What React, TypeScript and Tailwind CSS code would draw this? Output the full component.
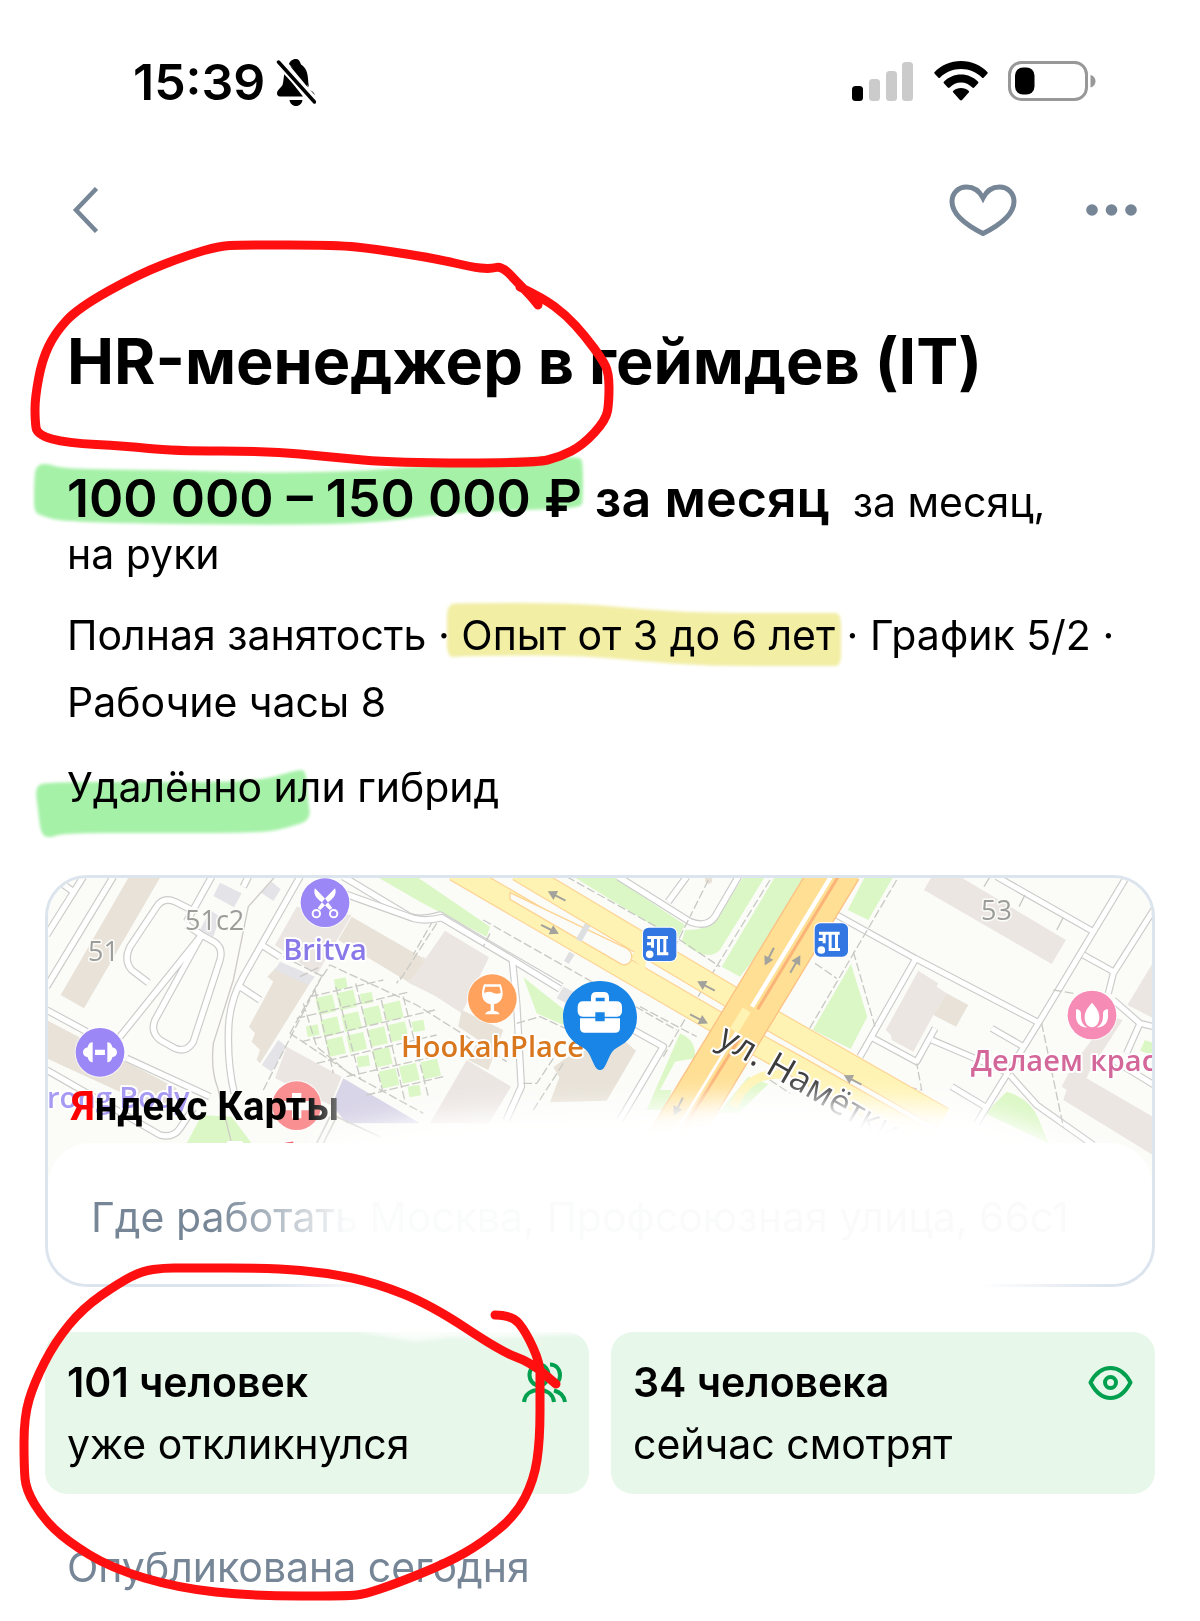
import { ReactNode } from "react";

type Point = [number, number];

// Rounds a hand-drawn point list with midpoint quadratics
function smooth(points: Point[], closed = false) {
  const mid = (a: Point, b: Point): Point => [(a[0] + b[0]) / 2, (a[1] + b[1]) / 2];
  if (closed) {
    const start = mid(points[points.length - 1], points[0]);
    const body = points.map((p, i) => {
      const m = mid(p, points[(i + 1) % points.length]);
      return `Q${p[0]} ${p[1]} ${m[0]} ${m[1]}`;
    });
    return `M${start[0]} ${start[1]} ${body.join(" ")} Z`;
  }
  const body = points.slice(1, -1).map((p, i) => {
    const m = mid(p, points[i + 2]);
    return `Q${p[0]} ${p[1]} ${m[0]} ${m[1]}`;
  });
  const last = points[points.length - 1];
  return `M${points[0][0]} ${points[0][1]} ${body.join(" ")} L${last[0]} ${last[1]}`;
}

const titleStroke: Point[] = [
  [520, 287], [543, 298], [566, 315], [585, 336], [602, 359], [609, 373], [609, 402], [606, 420], [583, 445], [560, 457],
  [535, 463], [396, 463], [330, 457], [269, 451], [173, 451], [125, 446], [67, 443], [37, 435], [35, 420], [35, 398],
  [42, 360], [55, 333], [78, 308], [139, 274], [188, 255], [220, 246], [240, 245], [337, 245], [375, 249], [438, 259],
  [471, 267], [490, 269], [502, 266], [520, 285], [530, 295], [538, 305],
];

const statStroke: Point[] = [
  [495, 1315], [512, 1315], [526, 1332], [540, 1363], [540, 1383], [540, 1440], [534, 1480], [516, 1515], [482, 1543],
  [447, 1563], [395, 1584], [365, 1594], [348, 1596], [253, 1596], [178, 1588], [111, 1568], [67, 1541], [43, 1518],
  [26, 1490], [24, 1467], [24, 1417], [34, 1383], [55, 1342], [83, 1308], [119, 1283], [142, 1271], [164, 1268],
  [184, 1268], [273, 1268], [328, 1273], [376, 1283], [431, 1305], [502, 1352], [530, 1362], [556, 1384],
];

const salaryMark: Point[] = [
  [35, 466], [46, 463], [63, 469], [168, 470], [269, 473], [370, 471], [450, 463], [535, 457], [579, 457], [583, 461],
  [583, 500], [581, 508], [526, 510], [446, 513], [370, 524], [227, 525], [63, 522], [42, 516], [34, 512], [34, 490],
];

const experienceMark: Point[] = [
  [447, 604], [462, 603], [574, 603], [640, 609], [703, 613], [830, 613], [841, 613], [841, 640], [841, 666], [830, 666],
  [703, 666], [640, 661], [574, 655], [462, 656], [447, 658], [447, 630],
];

const remoteMark: Point[] = [
  [35, 786], [48, 782], [150, 782], [256, 782], [297, 770], [306, 770], [308, 800], [311, 820], [290, 827], [264, 833],
  [150, 833], [63, 833], [50, 838], [41, 835], [38, 810],
];

function MarkerHighlights() {
  return (
    <svg className="pointer-events-none absolute top-0 left-0 h-[1621px] w-[1200px] mix-blend-multiply" viewBox="0 0 1200 1621" aria-hidden="true">
      <defs>
        <filter id="marker" x="-5%" y="-20%" width="110%" height="140%">
          <feGaussianBlur stdDeviation="1.5" />
        </filter>
      </defs>
      <g filter="url(#marker)">
        <path d={smooth(salaryMark, true)} fill="#a6f1a8" />
        <path d={smooth(experienceMark, true)} fill="#f2eea4" />
        <path d={smooth(remoteMark, true)} fill="#a6f1a8" />
      </g>
    </svg>
  );
}

function PenStrokes() {
  return (
    <svg className="pointer-events-none absolute top-0 left-0 h-[1621px] w-[1200px]" viewBox="0 0 1200 1621" aria-hidden="true">
      <defs>
        <linearGradient id="eraser">
          <stop offset="0" stopColor="#fff" stopOpacity="0" />
          <stop offset=".15" stopColor="#fff" />
          <stop offset=".85" stopColor="#fff" />
          <stop offset="1" stopColor="#fff" stopOpacity="0" />
        </linearGradient>
        <filter id="soft" x="-10%" y="-80%" width="120%" height="260%">
          <feGaussianBlur stdDeviation="2" />
        </filter>
      </defs>
      <rect x="260" y="1282" width="850" height="9" fill="url(#eraser)" />
      <path d="M355 1330 390 1337 415 1341 450 1337 500 1338 545 1335 585 1334V1328H355Z" fill="#fff" opacity=".8" filter="url(#soft)" />
      <g fill="none" stroke="#ff0f0f" strokeWidth="9" strokeLinecap="round" strokeLinejoin="round">
        <path d={smooth(titleStroke)} />
        <path d={smooth(statStroke)} />
      </g>
    </svg>
  );
}

function BellOffIcon() {
  return (
    <svg className="h-[48px] w-[40px]" viewBox="0 0 40 48" aria-hidden="true">
      <path d="M20 1c-4 0-6 2.400-7 5l20 23c-1-4-.5-12-3-17-1.400-3-3.600-4.600-5-5.500C24 3 22.500 1 20 1ZM8.500 15c-1 4-1 9-2 12-1.500 3-5.500 5-5.500 8.500C1 37 2 38.500 4 38.500h23Z" />
      <path d="M30 20c1 6 1 9 3.500 11.500C36 33.500 39 35 38.500 37.500L14 8Z" />
      <path d="M13.500 42h13c-.5 3.500-3 6-6.500 6s-6-2.500-6.500-6Z" />
      <path d="m3 5 37 39" stroke="#fff" strokeWidth="8" />
      <path d="m2.500 4 36 40" stroke="#000" strokeWidth="3.500" strokeLinecap="round" />
    </svg>
  );
}

function WifiIcon() {
  return (
    <svg className="h-[40px] w-[54px]" viewBox="0 0 54 40" aria-hidden="true">
      <path d="M27 0C16.500 0 7 4.300.7 11c-.7.700-.6 1.200 0 1.800l3.500 3.700c.7.700 1.200.700 1.900 0C11.500 11.200 18.800 8 27 8s15.500 3.200 20.900 8.500c.7.700 1.200.700 1.900 0l3.500-3.700c.6-.6.7-1.100 0-1.800C47 4.300 37.500 0 27 0Z" />
      <path d="M27 13.500c-6.700 0-12.500 2.700-16.900 7-.7.700-.7 1.200 0 1.900l3.700 4c.6.700 1.200.600 1.900 0C18.700 23.500 22.700 21.500 27 21.500s8.300 2 11.300 4.900c.7.600 1.300.700 1.900 0l3.700-4c.7-.7.7-1.200 0-1.900-4.400-4.300-10.200-7-16.900-7Z" />
      <path d="M27 27c-3 0-5.500 1-7.600 2.800-.7.600-.7 1.100-.1 1.800l6.400 7.100c.9 1 1.700 1 2.600 0l6.400-7.100c.6-.7.600-1.200-.1-1.800C32.500 28 30 27 27 27Z" />
    </svg>
  );
}

function StatusBar() {
  return (
    <div className="flex h-[160px] items-center justify-between pt-[2px] pr-[104px] pl-[133px]">
      <div className="flex items-center gap-[11px] pt-[2px]">
        <span className="text-[50px] leading-[60px] font-semibold">15:39</span>
        <BellOffIcon />
      </div>
      <div className="flex items-center gap-[20px]">
        <svg className="h-[40px] w-[62px]" viewBox="0 0 62 40" aria-hidden="true">
          <rect x="0" y="25" width="11" height="15" rx="3.500" />
          <g fill="#cbcbcb">
            <rect x="17" y="18" width="11" height="22" rx="3.500" />
            <rect x="34" y="10" width="11" height="30" rx="3.500" />
            <rect x="50" y="1" width="11" height="39" rx="3.500" />
          </g>
        </svg>
        <WifiIcon />
        <svg className="h-[40px] w-[88px]" viewBox="0 0 88 40" aria-hidden="true">
          <rect x="1.500" y="1.500" width="77" height="37" rx="12" fill="none" stroke="#989898" strokeWidth="3" />
          <rect x="7" y="6.500" width="19.500" height="27" rx="8" />
          <path d="M82.500 14c3 .800 5 3 5 6.300s-2 5.500-5 6.300Z" fill="#989898" />
        </svg>
      </div>
    </div>
  );
}

function NavBar() {
  return (
    <nav className="flex h-[100px] items-center justify-between pr-[60px] pl-[70px] text-[#768696]">
      <button type="button" aria-label="Назад">
        <svg className="h-[46px] w-[30px]" viewBox="0 0 30 46" fill="none" stroke="currentColor" strokeWidth="4.500" aria-hidden="true">
          <path d="M26.500 1.500 6 23l20.500 21.500" />
        </svg>
      </button>
      <div className="flex items-center gap-[67px]">
        <button type="button" aria-label="В избранное">
          <svg className="h-[52px] w-[68px]" viewBox="0 0 68 52" fill="none" stroke="currentColor" strokeWidth="5" aria-hidden="true">
            <path d="M34 14C30.500 7 25 3 17.500 3 9 3 3 9.500 3 17.500 3 31 17 41 34 49.500 51 41 65 31 65 17.500 65 9.500 59 3 50.500 3 43 3 37.500 7 34 14Z" />
          </svg>
        </button>
        <button type="button" aria-label="Ещё">
          <svg className="h-[52px] w-[56px]" viewBox="0 0 56 52" fill="currentColor" aria-hidden="true">
            <circle cx="8" cy="26" r="5.800" />
            <circle cx="27.500" cy="26" r="5.800" />
            <circle cx="47" cy="26" r="5.800" />
          </svg>
        </button>
      </div>
    </nav>
  );
}

// Every street is drawn twice: grey casing first, white fill on top
function Streets({ d, width = 16 }: { d: string; width?: number }) {
  return (
    <g fill="none" strokeLinejoin="round">
      <path d={d} stroke="#cccccb" strokeWidth={width + 7} />
      <path d={d} stroke="#ffffff" strokeWidth={width} />
    </g>
  );
}

function RoadArrow({ x, y, angle }: { x: number; y: number; angle: number }) {
  return (
    <g transform={`translate(${x} ${y}) rotate(${angle})`} fill="#a3a29c">
      <rect x="-30" y="-3" width="36" height="6" />
      <path d="M3-15 30 0 3 15Z" />
    </g>
  );
}

function PoiPin({ x, y, color, children }: { x: number; y: number; color: string; children: ReactNode }) {
  return (
    <g transform={`translate(${x} ${y})`}>
      <circle r="76" fill="#fff" opacity=".7" />
      <circle r="73" fill={color} />
      {children}
    </g>
  );
}

function BusStop({ x, y }: { x: number; y: number }) {
  return (
    <g transform={`translate(${x} ${y})`}>
      <rect x="-3" y="-3" width="106" height="106" rx="20" fill="#fff" />
      <rect width="100" height="100" rx="17" fill="#3377e2" />
      <path d="M13 25h62v9h-5v40h6v9H42V34H33v26h-9v-7H12v-9h12V34H13ZM51 34v40h10V34Z" fill="#fff" fillRule="evenodd" />
      <circle cx="20" cy="80" r="14" fill="#fff" stroke="#3377e2" strokeWidth="5" />
    </g>
  );
}

const lawns: Point[] = [
  [887, 434], [950, 420], [1027, 467], [1090, 453], [902, 500], [965, 485], [917, 560], [980, 547], [1043, 530],
  [1105, 515], [1057, 592], [1077, 655], [1138, 640], [1202, 627],
];
const smallLawns: Point[] = [[932, 370], [1010, 414], [848, 511], [1165, 497], [1000, 603], [1153, 692]];

function CityMap() {
  return (
    <svg
      className="absolute inset-x-0 top-0 h-[310px] w-full"
      viewBox="48 878 1104 310"
      preserveAspectRatio="xMidYMin slice"
      fontFamily="'Open Sans', 'Noto Sans', sans-serif"
      role="img"
      aria-label="Карта"
    >
      <defs>
        <filter id="haze" x="-20%" y="-40%" width="140%" height="180%">
          <feGaussianBlur stdDeviation="13" />
        </filter>
      </defs>
      <rect x="48" y="878" width="1104" height="310" fill="#fbfcf8" />

      {/* West blocks */}
      <g transform="translate(30 860) scale(.33333)">
        <g fill="#e8e2d8">
          <path d="M297 50h95L162 445l-70-40ZM50 480l390 205-40 70L50 595ZM750 310l90 60-150 240-10-10 10-30-25-25 10-25-18-20 73-135-18-15ZM965 170l225 130-40 75-225-135Z" />
        </g>
        <g fill="#ece6e3">
          <path d="m800 140 165 25-105 180-125-90ZM770 560l165 90-35 85-165-80ZM1180 290l60 40v90l-110-55Z" />
        </g>
        <g fill="#e4e3e7">
          <path d="m570 68 65 32-23 42-62-34ZM725 65l27 23-22 35-37-25ZM750 305l105 45-20 25-100-45ZM745 540l25 20-45 75-30-20ZM540 150l30 20-20 60-40-20Z" />
        </g>
        <path d="m940 655 230 135H950l-45-55Z" fill="#d9d5e8" />
        <g fill="#dcf7c6">
          <path d="M1040 50h120l220 150-10 30-200-105ZM515 765l90 5 60 80H470Z" />
          {lawns.map(([x, y]) => (
            <rect key={`${x}-${y}`} x={x - 26} y={y - 26} width="52" height="52" transform={`rotate(-13 ${x} ${y})`} />
          ))}
          {smallLawns.map(([x, y]) => (
            <rect key={`${x}-${y}`} x={x - 18} y={y - 15} width="36" height="32" transform={`rotate(-10 ${x} ${y})`} />
          ))}
        </g>
        <Streets d="M250 50 50 380M160 50 50 225M95 70l35 25M50 450l120 65M290 595l250 115M50 630l340 195q40 10 60-20l40-60M655 50l-15 30" />
        <Streets d="M545 50 470 185M485 150l-50-25q-35-15-55 15l-80 120q-20 40 5 70l50 38M470 195l45 30M515 225 270 530M515 225l40 22q25 18 15 53l-80 245q-20 35-55 20l-45-25q-30-25-15-60Z" />
        <Streets d="M810 50 640 350q-40 70-44 150-5 110 17 200M695 255l55 35M630 380l60 40M940 50l200 120q30 12 90-5l210 125 155 90" />
        <path d="m735 50-80 90-45 220-60 190q-8 80 12 130l43 170" fill="none" stroke="#cfcbc6" strokeWidth="4" />
        <g fill="none" stroke="#c9c9c4" strokeWidth="4" strokeDasharray="26 9">
          <path d="m700 690 170-330 30-45 260 120 270 170M810 350l60-30M760 290l120 60M780 520l100-180M780 520l180 120 220 120M820 430l40 130 110 90M855 390l55 250M917 380l75 280M977 370l80 320M1054 420l70 300M1120 410l75 300" />
          <path d="m840 410 220-50M800 475l340-80M815 545l400-95M860 610l360-85M950 650l270-62M1010 705l230-55M1210 180l-110 190" />
        </g>
        <path d="m900 770-40 80M920 770l-40 80M920 770l130 60" fill="none" stroke="#d5d5d2" strokeWidth="5" />
      </g>

      {/* Centre blocks */}
      <g transform="translate(400 860) scale(.33333)">
        <g fill="#dcf7c6">
          <path d="M520 50h120l215 145-25 45ZM855 210q70 0 95-30l80-130h65L960 270q-40 40-115-25ZM1125 50h130L1020 350l-55-30ZM370 352l120 95v48l-80-35ZM840 520q50 20 45 75l-60 10-45 85h35l-15 60h-60ZM1045 650l60 22-90 88h-60Z" />
        </g>
        <g fill="#ece6e3">
          <path d="m135 212 132 80-82 168L32 360ZM200 600l133 80-65 110H90Z" />
        </g>
        <g fill="#e8e2d8">
          <path d="m0 258 75 47-45 55-30-10ZM185 450l125 60-45 120-60-30 30-60-60-40ZM660 530l48 42-88 150-170 5 28-75-18-30 40-30 80-30Z" />
          <circle cx="926" cy="60" r="11" />
        </g>
        <path d="m600 140 55 30-15 20-50-25ZM490 380l40 20-20 35-40-20Z" fill="#e3e3e6" />
        <Streets d="M-170 100 40 175q40 10 85-2l205 122 150 92M337 300l13 130 14 250-45 100M700 510l90 50-130 220M655 50l215 135q50 20 75-15l70-120M860 50l-55 75" />
        <g fill="none" stroke="#c9c9c4" strokeWidth="4" strokeDasharray="26 9">
          <path d="m110 190-110 170M500 50l340 190 120 80M250 180l580 330M270 220l-20 40M865 180l-40 80M1110 60 900 400 790 590M350 490l70-20 130 60M370 670h40l60-90M400 750l90-140M720 440l170 90" />
          <path d="M925 60 870 170M1080 640l90 60" />
        </g>
      </g>

      {/* East blocks */}
      <g transform="translate(780 860) scale(.33333)">
        <g fill="#dcf7c6">
          <path d="M255 50h85l-75 130-62-30ZM213 312l49 158-50 97-114-57ZM680 695q70 20 95 80l30 75-190-90ZM1095 540l35 12v38l-50-18Z" />
        </g>
        <g fill="#ece6e3">
          <path d="M455 50h85l318 190-43 72L432 90ZM415 332l60 38-5 10 30 20-40 65-60 110-65-35-2-15-16-15ZM1130 290v190l-88-45ZM930 450l98 30-100 155-8 20 210 122v115L850 720l10-30-15-10 30-60 60-80Z" />
        </g>
        <path d="m500 400 65 35-37 65-68-35Z" fill="#e8e2d8" />
        <Streets d="m170 165 235 130 375 195M405 300 240 590M280 535l130 70 55-100M455 540l235 100M1040 50 775 490 590 790M1130 135l-130 205-15 60M910 285l90 50M650 50l290 165M635 505l95 55M1000 420l80 70 50 12M1080 490l-40 90M1000 600l130 80M690 645l80 90 170 120M515 680l100 60" width={15} />
        <g fill="none" stroke="#c9c9c4" strokeWidth="4" strokeDasharray="26 9">
          <path d="m350 60-270 460M220 275l65 225M80 510l300 170 45 10-15-80M785 490l65 310M105 310l65 45M880 400l-60-10" />
        </g>
        <path d="m630 50-18 30M735 105l-18 35M850 172l-20 38" stroke="#c9c9c4" strokeWidth="4" />
      </g>

      {/* Main roads */}
      <g transform="translate(400 860) scale(.33333)" fill="none">
        <path d="m165 30 800 465 235 130 500 285M355 30l645 385 210 120 420 240" stroke="#fdd394" strokeWidth="70" />
        <path d="m165 30 800 465 235 130 500 285M355 30l645 385 210 120 420 240" stroke="#fff3b3" strokeWidth="63" />
        <path d="m690 290 20-20 30 20-5 40Z" fill="#fff3b3" />
        <path d="m330 98 350 167q25 18 10 42-10 10-25 6L330 118Z" fill="#fbfcf8" stroke="#fdd394" strokeWidth="4" />
        <path d="m555 190 16 9-27 47-16-9ZM508 275l16 9-18 28-14-10Z" fill="#dedfe0" />
        <path d="M1315 20 800 868" stroke="#fcc183" strokeWidth="148" />
        <path d="M1315 20 800 868" stroke="#ffdf94" strokeWidth="140" />
        <path d="m1311 20-255 420" stroke="#fff" strokeWidth="13" />
        <path d="M1010 515 795 868" stroke="#fff" strokeWidth="8" />
        <path d="m1333 20-260 428M1024 526 812 868" stroke="#fbb477" strokeWidth="9" />
        <path d="m1040 450-38 62" stroke="#fff3b3" strokeWidth="28" />
        <path d="M1000 740q50-110 150-95" stroke="#fff3b3" strokeWidth="26" />
        <RoadArrow x={470} y={108} angle={208} />
        <RoadArrow x={450} y={208} angle={27} />
        <RoadArrow x={918} y={378} angle={208} />
        <RoadArrow x={897} y={477} angle={27} />
        <RoadArrow x={1108} y={290} angle={117} />
        <RoadArrow x={1186} y={312} angle={-60} />
        <RoadArrow x={1358} y={660} angle={208} />
        <RoadArrow x={835} y={740} angle={117} />
      </g>

      {/* Labels and pins */}
      <g strokeLinejoin="round" stroke="#fff" strokeWidth="4" paintOrder="stroke" fontSize="29" fontWeight="600">
        <g fill="#9c9c9a" stroke="#fbfcf8" strokeWidth="3" fontSize="27" fontWeight="400">
          <text x="88" y="961">51</text>
          <text x="185" y="930">51с2</text>
          <text x="981" y="920">53</text>
        </g>
        <text x="325" y="960" fill="#8979e8" textAnchor="middle">Britva</text>
        <text x="401" y="1057" fill="#d9771f">HookahPlace</text>
        <text x="971" y="1071" fill="#d4679a">Делаем крас</text>
        <text x="47" y="1108" fill="#a79af2">rong Body</text>
        <text x="226" y="1164" fill="#f06a70">Горбольница</text>
        <text transform="translate(716 1044) rotate(30)" fill="#3c3c3c" fontSize="35" fontWeight="400">ул. Намёткина</text>
      </g>
      <g transform="translate(30 860) scale(.33333)">
        <PoiPin x={885} y={128} color="#9c87f6">
          <path d="M-30-43C-36-28-28-14-10-2L14 22l8-6L2-10ZM30-43C36-28 28-14 10-2L-14 22l-8-6L-2-10Z" fill="#fff" />
          <circle cx="-26" cy="33" r="11" fill="none" stroke="#fff" strokeWidth="6" />
          <circle cx="26" cy="33" r="11" fill="none" stroke="#fff" strokeWidth="6" />
        </PoiPin>
        <PoiPin x={210} y={577} color="#9c87f6">
          <path d="M-15-8h30V8h-30ZM-22-30v60q-12 0-15-15-14-3-14-15t14-15q3-15 15-15ZM22-30v60q12 0 15-15 14-3 14-15T37-15Q34-30 22-30Z" fill="#fff" />
        </PoiPin>
        <PoiPin x={800} y={737} color="#f98f90">
          <path d="M-14-38h28v24h26v28H14v24h-28V14h-26v-28h26Z" fill="#fff" />
        </PoiPin>
      </g>
      <g transform="translate(400 860) scale(.33333)">
        <PoiPin x={277} y={416} color="#fea25d">
          <path d="M-25-43h50c4 10 6 20 6 30C31 4 18 15 5 17v19c8 1 15 4 17 11h-44c2-7 9-10 17-11V17C-18 15-31 4-31-13c0-10 2-20 6-30Zm4 7c-2 7-4 13-3 19q16-7 27 0 11 5 22 0c0-7-2-13-4-19Z" fill="#fff" fillRule="evenodd" />
        </PoiPin>
        <BusStop x={729} y={203} />
        <path d="M600 363c-61 0-111 48-111 109 0 45 26 75 60 91 23 12 27 45 40 62 6 7 16 7 22 0 13-17 17-50 40-62 34-16 60-46 60-91 0-61-50-109-111-109Z" fill="#1985e6" />
        <path d="M553 424h20v-12q0-16 16-16h22q16 0 16 16v12h22q17 0 17 17v13q0 15-15 16h-37v-13h-28v13h-38q-15-1-15-16v-13q0-17 17-17Zm34 0h27v-11h-27ZM540 475h46v9h28v-9h46v28q0 15-15 15h-90q-15 0-15-15Z" fill="#fff" fillRule="evenodd" />
      </g>
      <g transform="translate(780 860) scale(.33333)">
        <BusStop x={104} y={190} />
        <PoiPin x={936} y={465} color="#f68bb6">
          <path d="M0-37c10 12 22 24 22 44C22 25 12 37 0 37S-22 25-22 7c0-20 12-32 22-44ZM-48-17q14 0 15 12C-34 15-30 30-14 37c-20 2-34-14-34-32ZM48-17q-14 0-15 12C34 15 30 30 14 37c20 2 34-14 34-32Z" fill="#fff" />
        </PoiPin>
      </g>

      {/* Erased area */}
      <path d="M300 1240 330 1145 420 1127 500 1120 620 1117 720 1108 800 1108 880 1112 960 1116 1040 1140 1150 1190V1260Z" fill="#fff" stroke="#fff" strokeWidth="18" filter="url(#haze)" />
    </svg>
  );
}

function MapCard() {
  return (
    <section className="relative mx-[45px] mt-[54px] overflow-hidden rounded-[42px] border-3 border-[#dce4ee] bg-white pt-[265px]">
      <CityMap />
      <p className="absolute top-[201px] left-[23px] font-['Roboto',sans-serif] text-[40px] leading-[56px] font-bold">
        <span className="text-[#ff0000]">Я</span>
        <span className="bg-linear-to-r from-black from-80% to-[#777777] bg-clip-text text-transparent">ндекс Карты</span>
      </p>
      <div className="relative rounded-t-[42px] bg-white px-[43px] pt-[41px] pb-[33px]">
        <p className="bg-linear-to-r from-[#768696] from-12% via-[#fafbfb] via-25% to-[#fafafa] bg-clip-text text-[41px] leading-[67px] whitespace-nowrap text-transparent">
          Где работать Москва, Профсоюзная улица, 66с1
        </p>
      </div>
    </section>
  );
}

function UsersIcon() {
  return (
    <svg className="h-[45px] w-[45px]" viewBox="0 0 45 45" fill="none" stroke="#00a04e" strokeWidth="4" aria-hidden="true">
      <ellipse cx="17" cy="15" rx="9.500" ry="10.500" />
      <path d="M2 42c1-8 7-12 15-12s14 4 15 12M28 4.500c6 0 10 4.500 10 10.500 0 4.500-2 8-6 10M32 30.500c6 1.500 10 5 11 11.500" />
    </svg>
  );
}

function EyeIcon() {
  return (
    <svg className="h-[45px] w-[45px]" viewBox="0 0 45 45" fill="none" stroke="#00a04e" strokeWidth="4" aria-hidden="true">
      <path d="M22.500 8C13 8 7 14 2.500 22.500 7 31 13 38 22.500 38S38 31 42.500 22.500C38 14 32 8 22.500 8Z" strokeLinejoin="round" />
      <circle cx="22.500" cy="22.500" r="5.500" />
    </svg>
  );
}

function StatCard({ title, note, icon }: { title: string; note: string; icon: ReactNode }) {
  return (
    <div className="flex flex-1 items-start justify-between rounded-[22px] bg-[#e7f7ea] px-[22px] py-[19px]">
      <div className="text-[41px] leading-[62px]">
        <p className="font-semibold">{title}</p>
        <p>{note}</p>
      </div>
      <div className="pt-[9px]">{icon}</div>
    </div>
  );
}

export default function App() {
  return (
    <div className="relative min-h-screen overflow-hidden bg-white pb-[19px] font-['Inter',sans-serif] text-black">
      <StatusBar />
      <NavBar />
      <main>
        <div className="px-[67px]">
          <h1 className="pt-[61px] text-[63px] leading-[80px] font-bold">HR-менеджер в геймдев (IT)</h1>
          <p className="mt-[72px] text-[41px] leading-[52px]">
            <span className="text-[52px] font-semibold">100 000 – 150 000 ₽ за месяц</span>&nbsp; за месяц,
            <br />
            на руки
          </p>
          <p className="mt-[22px] text-[41px] leading-[67px]">
            Полная занятость · Опыт от 3 до 6 лет · График 5/2 ·<br />
            Рабочие часы 8
          </p>
          <p className="mt-[18px] text-[41px] leading-[67px]">Удалённо или гибрид</p>
        </div>
        <MapCard />
        <div className="mx-[45px] mt-[45px] flex gap-[22px]">
          <StatCard title="101 человек" note="уже откликнулся" icon={<UsersIcon />} />
          <StatCard title="34 человека" note="сейчас смотрят" icon={<EyeIcon />} />
        </div>
        <p className="mt-[40px] px-[67px] text-[41px] leading-[67px] text-[#768696]">Опубликована сегодня</p>
      </main>
      <MarkerHighlights />
      <PenStrokes />
    </div>
  );
}
